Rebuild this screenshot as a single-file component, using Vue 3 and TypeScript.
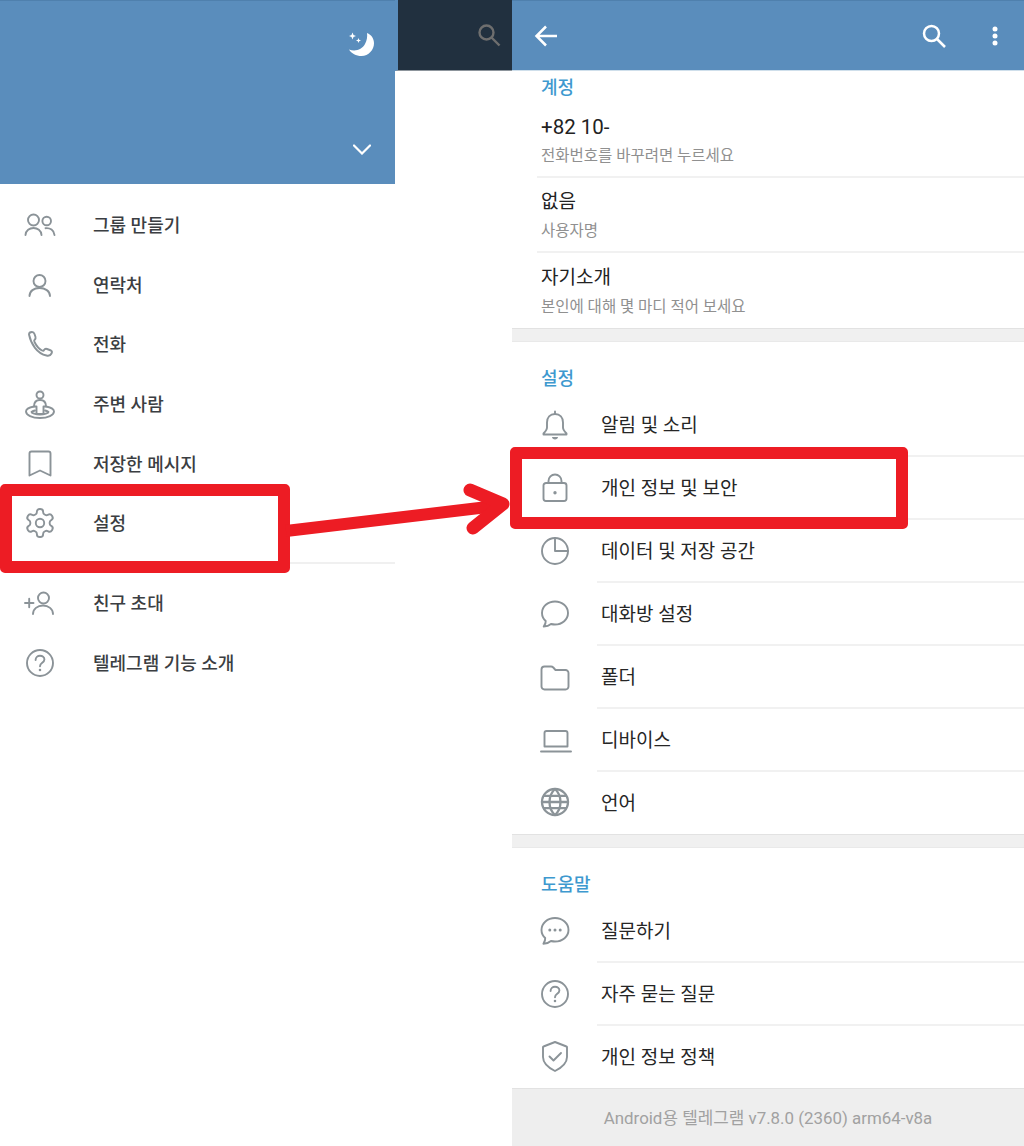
<script setup lang="ts">
type Icon = { view?: string; width?: number; paths: string[]; solid?: string[]; cover?: string[] };

const question: Icon = {
  paths: [
    "M29 16a13 13 0 1 1-26 0 13 13 0 0 1 26 0z",
    "M11.600 13c0-2.600 2-4.200 4.400-4.200s4.400 1.500 4.400 3.800c0 3.200-4.400 3.300-4.400 6.600",
  ],
  solid: ["M14.700 23a1.300 1.300 0 1 0 2.600 0 1.300 1.300 0 0 0-2.600 0z"],
};

const icons: Record<string, Icon> = {
  group: {
    paths: [
      "M15 11a5.500 5.500 0 1 1-11 0 5.500 5.500 0 0 1 11 0z",
      "M27 12a4.300 4.300 0 1 1-8.600 0 4.300 4.300 0 0 1 8.600 0z",
      "M1.500 26c.3-4.500 4-7 8-7s7.700 2.500 8 7",
      "M21.500 19.200c4.500-.6 8.600 2 9 6.800",
    ],
  },
  person: {
    paths: [
      "M21.500 12a6 6 0 1 1-12 0 6 6 0 0 1 12 0z",
      "M5.500 27c0-5 4.500-8 10-8s10.500 3 10.500 8",
    ],
  },
  phone: {
    paths: [
      "M5 6.500C5 5 6.500 4 8 4c1 0 2 .5 2.500 2l1 3c.5 1.500 0 2-1 3-.5.5-.5 1 0 2 2 4 4.500 7 7.500 8.500 1 .5 1.500.5 2-.5.5-.8 1.500-1.500 3-1l4 1.500c1 .5 1 2 .5 3-1 2-3 2.500-5 2C13 25.500 7 16 5 6.500z",
    ],
  },
  nearby: {
    paths: [
      "M10 18.500C5 19.500 2 21 2 23.500 2 27 8 30 16 30s14-3 14-6.500c0-2.500-3-4-8-5",
      "M11 22.500c-2 .5-3.500 1-3.500 1.500 0 1 4 2.500 8.500 2.500s8.500-1.500 8.500-2.500c0-.5-1.500-1-3.500-1.500",
      "M19.500 7a3.500 3.500 0 1 1-7 0 3.500 3.500 0 0 1 7 0z",
    ],
    cover: ["M10 18.500c0-4.500 2.500-6.500 6-6.500s6 2 6 6.500h-2.500V26h-7v-7.500z"],
  },
  bookmark: {
    paths: ["M7.500 3.500h17a2 2 0 0 1 2 2v22l-10.500-5-10.500 5v-22a2 2 0 0 1 2-2z"],
  },
  gear: {
    view: "0.600 0.600 22.800 22.800",
    paths: [
      "M12.220 2h-.44a2 2 0 0 0-2 2v.18a2 2 0 0 1-1 1.730l-.43.25a2 2 0 0 1-2 0l-.15-.08a2 2 0 0 0-2.730.73l-.22.38a2 2 0 0 0 .73 2.730l.15.1a2 2 0 0 1 1 1.720v.51a2 2 0 0 1-1 1.740l-.15.09a2 2 0 0 0-.73 2.730l.22.38a2 2 0 0 0 2.730.73l.15-.08a2 2 0 0 1 2 0l.43.25a2 2 0 0 1 1 1.730V20a2 2 0 0 0 2 2h.44a2 2 0 0 0 2-2v-.18a2 2 0 0 1 1-1.730l.43-.25a2 2 0 0 1 2 0l.15.08a2 2 0 0 0 2.730-.73l.22-.39a2 2 0 0 0-.73-2.730l-.15-.08a2 2 0 0 1-1-1.740v-.5a2 2 0 0 1 1-1.740l.15-.09a2 2 0 0 0 .73-2.730l-.22-.38a2 2 0 0 0-2.730-.73l-.15.08a2 2 0 0 1-2 0l-.43-.25a2 2 0 0 1-1-1.730V4a2 2 0 0 0-2-2z",
      "M15 12a3 3 0 1 1-6 0 3 3 0 0 1 6 0z",
    ],
  },
  invite: {
    paths: [
      "M1 16h8.500M5.200 11.700v8.600",
      "M25 11a5.500 5.500 0 1 1-11 0 5.500 5.500 0 0 1 11 0z",
      "M9 27c0-5 4.500-8.500 10-8.500s10 3.500 10 8.500",
    ],
  },
  question,
  bell: {
    paths: [
      "M16 5c-5 0-8 3.500-8 8.500v5c0 2.500-1.500 4-3.500 6v1h23v-1c-2-2-3.500-3.500-3.500-6v-5C24 8.500 21 5 16 5z",
      "M16 2.500V5",
    ],
    solid: ["M13 28h6c0 1.500-1.400 2.500-3 2.500s-3-1-3-2.500z"],
  },
  lock: {
    paths: [
      "M7 11h18a2.500 2.500 0 0 1 2.500 2.500v13a2.500 2.500 0 0 1-2.500 2.500H7a2.500 2.500 0 0 1-2.500-2.500v-13A2.500 2.500 0 0 1 7 11z",
      "M9.500 11V9a6.500 6.500 0 0 1 13 0v2",
    ],
    solid: ["M14.300 20.800a1.700 1.700 0 1 0 3.400 0 1.700 1.700 0 0 0-3.400 0z"],
  },
  pie: {
    paths: [
      "M29 16a13 13 0 1 1-26 0 13 13 0 0 1 26 0z",
      "M16 3v13h13",
    ],
  },
  chat: {
    paths: [
      "M16 3.500c-7.200 0-13 5-13 11.500 0 3.200 1.400 6 3.700 8 .2 2-.8 4-2 5.500 3-.1 5.500-1 7.300-2.500 1.300.3 2.600.5 4 .5 7.200 0 13-5 13-11.500S23.200 3.500 16 3.500z",
    ],
  },
  folder: {
    paths: [
      "M5.500 5.500h6.500c1 0 1.700.4 2.300 1l2.200 2.500h10a3 3 0 0 1 3 3v13.500a3 3 0 0 1-3 3H5.500a3 3 0 0 1-3-3v-17a3 3 0 0 1 3-3z",
    ],
  },
  laptop: {
    width: 34,
    paths: [
      "M7.500 7h19a2 2 0 0 1 2 2v13.500h-23V9a2 2 0 0 1 2-2z",
      "M2 27.500h30",
    ],
  },
  globe: {
    paths: [
      "M29 16a13 13 0 1 1-26 0 13 13 0 0 1 26 0z",
      "M16 3c-3.600 3.300-5.500 7.800-5.500 13s1.900 9.700 5.500 13c3.600-3.300 5.500-7.800 5.500-13S19.600 6.300 16 3z",
      "M3 16h26M5 9.800h22M5 22.200h22",
    ],
  },
  ask: {
    paths: [
      "M16 3c-7.500 0-13.500 5.300-13.500 12 0 3.200 1.400 6 3.700 8 .2 2-.6 4-1.800 5.800 3-.1 5.800-1.200 7.600-2.800 1.300.3 2.600.5 4 .5 7.500 0 13.500-5 13.500-11.500S23.500 3 16 3z",
    ],
    solid: [
      "M9.300 15a1.500 1.500 0 1 0 3 0 1.500 1.500 0 0 0-3 0zM14.500 15a1.500 1.500 0 1 0 3 0 1.500 1.500 0 0 0-3 0zM19.700 15a1.500 1.500 0 1 0 3 0 1.500 1.500 0 0 0-3 0z",
    ],
  },
  shield: {
    paths: [
      "M16 2l11.500 4.500c.3 0 .5.3.5.6V17c0 6-5 10.500-12 14-7-3.500-12-8-12-14V7.100c0-.3.2-.6.5-.6L16 2z",
      "M10.500 16.500l4 4 7.500-7.500",
    ],
  },
};

const drawerTop = [
  { icon: "group", label: "그룹 만들기" },
  { icon: "person", label: "연락처" },
  { icon: "phone", label: "전화" },
  { icon: "nearby", label: "주변 사람" },
  { icon: "bookmark", label: "저장한 메시지" },
  { icon: "gear", label: "설정" },
];
const drawerBottom = [
  { icon: "invite", label: "친구 초대" },
  { icon: "question", label: "텔레그램 기능 소개" },
];

const account = [
  { value: "+82 10-", hint: "전화번호를 바꾸려면 누르세요", phone: true },
  { value: "없음", hint: "사용자명", phone: false },
  { value: "자기소개", hint: "본인에 대해 몇 마디 적어 보세요", phone: false },
];

const sections = [
  {
    title: "설정",
    rows: [
      { icon: "bell", label: "알림 및 소리" },
      { icon: "lock", label: "개인 정보 및 보안" },
      { icon: "pie", label: "데이터 및 저장 공간" },
      { icon: "chat", label: "대화방 설정" },
      { icon: "folder", label: "폴더" },
      { icon: "laptop", label: "디바이스" },
      { icon: "globe", label: "언어" },
    ],
  },
  {
    title: "도움말",
    rows: [
      { icon: "ask", label: "질문하기" },
      { icon: "question", label: "자주 묻는 질문" },
      { icon: "shield", label: "개인 정보 정책" },
    ],
  },
];

const viewBox = (name: string) => {
  const ic = icons[name];
  return ic.view ?? `0 0 ${ic.width ?? 32} 32`;
};
</script>

<template>
  <div class="page">
    <section class="left">
      <div class="drawer">
        <header class="drawer-head">
          <svg class="moon" width="27" height="27" viewBox="0 0 27 27" fill="#fff">
            <path d="M19 2c4.500 1.700 7 5.700 7 10.300C26 19 20.500 25 13.500 25 8 25 3.500 22.500 1 18.500c6.500 2.500 13 0 16-5.500 2-3.500 2.500-7.500 2-11z" />
            <path d="M4.500 1.500l1 2.500 2.500 1-2.500 1-1 2.500-1-2.500L1 5l2.500-1zM10.500 7l.7 1.800 1.800.7-1.800.7-.7 1.800-.7-1.800L8 9.500l1.800-.7z" />
          </svg>
          <svg class="chevron" width="18" height="11" viewBox="0 0 18 11" fill="none" stroke="#fff" stroke-width="2.200" stroke-linecap="round">
            <path d="M1 1.500l8 8 8-8" />
          </svg>
        </header>
        <ul class="drawer-list">
          <li v-for="item in drawerTop" :key="item.label" class="drawer-row">
            <svg class="icon" width="32" height="32" :viewBox="viewBox(item.icon)" :stroke-width="icons[item.icon].view ? 1.35 : 1.9">
              <path v-for="d in icons[item.icon].paths" :key="d" :d="d" />
              <path v-for="d in icons[item.icon].cover" :key="d" :d="d" class="cover" />
              <path v-for="d in icons[item.icon].solid" :key="d" :d="d" class="solid" />
            </svg>
            <span>{{ item.label }}</span>
          </li>
          <li class="drawer-sep" />
          <li v-for="item in drawerBottom" :key="item.label" class="drawer-row">
            <svg class="icon" width="32" height="32" :viewBox="viewBox(item.icon)" stroke-width="1.900">
              <path v-for="d in icons[item.icon].paths" :key="d" :d="d" />
              <path v-for="d in icons[item.icon].solid" :key="d" :d="d" class="solid" />
            </svg>
            <span>{{ item.label }}</span>
          </li>
        </ul>
      </div>
      <div class="dim-bar">
        <svg width="24" height="24" viewBox="0 0 24 24" fill="none" stroke="#6e6e6e" stroke-width="2.400">
          <circle cx="9.500" cy="9.500" r="7" />
          <path d="M14.500 14.500l8 8" />
        </svg>
      </div>
    </section>

    <section class="right">
      <header class="top-bar">
        <svg width="24" height="24" viewBox="0 0 24 24" fill="none" stroke="#fff" stroke-width="2.500">
          <path d="M23 12H3M12 2.500L2.500 12l9.500 9.500" />
        </svg>
        <span class="spacer" />
        <svg width="24" height="24" viewBox="0 0 24 24" fill="none" stroke="#fff" stroke-width="2.500">
          <circle cx="9.500" cy="9.500" r="7.500" />
          <path d="M15 15l8 8" />
        </svg>
        <svg class="dots" width="8" height="20" viewBox="0 0 8 20" fill="#fff">
          <circle cx="4" cy="3" r="2.500" />
          <circle cx="4" cy="10" r="2.500" />
          <circle cx="4" cy="17" r="2.500" />
        </svg>
      </header>

      <div class="block account">
        <h2 class="block-title first">계정</h2>
        <div v-for="row in account" :key="row.hint" class="account-row">
          <span class="value" :class="{ phone: row.phone }">{{ row.value }}</span>
          <span class="hint">{{ row.hint }}</span>
        </div>
      </div>

      <template v-for="sec in sections" :key="sec.title">
        <div class="band" />
        <div class="block">
          <h2 class="block-title">{{ sec.title }}</h2>
          <div v-for="row in sec.rows" :key="row.label" class="menu-row">
            <svg class="icon" width="32" height="32" :class="{ wide: icons[row.icon].width }" :viewBox="viewBox(row.icon)" :stroke-width="row.icon === 'globe' ? 2.3 : 1.9">
              <path v-for="d in icons[row.icon].paths" :key="d" :d="d" />
              <path v-for="d in icons[row.icon].solid" :key="d" :d="d" class="solid" />
            </svg>
            <span class="menu-label">{{ row.label }}</span>
          </div>
        </div>
      </template>

      <footer class="version">Android용 텔레그램 v7.8.0 (2360) arm64-v8a</footer>
    </section>

    <!-- red annotation drawn over the two screenshots -->
    <div class="mark mark-left" />
    <div class="mark mark-right" />
    <svg class="arrow" width="1024" height="1146" viewBox="0 0 1024 1146" fill="none" stroke="#ed1c24" stroke-width="12">
      <path d="M286 531L496 506" />
      <path d="M470 490L503 504L473 528" stroke-width="13" stroke-linecap="round" stroke-linejoin="round" />
    </svg>
  </div>
</template>

<style scoped>
.page {
  position: relative;
  display: flex;
  width: 1024px;
  height: 1146px;
  overflow: hidden;
  background: #fff;
  font-family: Roboto, "Noto Sans CJK KR", sans-serif;
}
.left {
  display: grid;
  grid-template-columns: 395px 1fr;
  width: 512px;
  align-items: start;
}
.drawer-head {
  display: flex;
  flex-direction: column;
  justify-content: space-between;
  align-items: flex-end;
  height: 184px;
  padding: 30px 20px 29px;
  box-sizing: border-box;
  background: #5a8dbc;
  border-top: 1px solid #4f80ad;
}
.chevron {
  margin-right: 4px;
}
.drawer-list {
  margin: 0;
  padding: 10px 0 0;
  list-style: none;
}
.drawer-row {
  display: flex;
  align-items: center;
  height: 59.7px;
  padding-left: 24px;
  color: #3b3e42;
  font-size: 18px;
  font-weight: 500;
}
.drawer-row .icon {
  margin-top: 2px;
}
.drawer-row span {
  margin-left: 37px;
}
.drawer-sep {
  height: 20px;
  box-sizing: border-box;
  border-top: 10.500px solid #fff;
  border-bottom: 8px solid #fff;
  background: #f0f0f0;
}
.icon {
  flex: none;
  fill: none;
  stroke: #8b9398;
  stroke-linecap: round;
  stroke-linejoin: round;
}
.icon .solid {
  fill: #8b9398;
  stroke: none;
}
.icon .cover {
  fill: #fff;
}
.dim-bar {
  display: flex;
  align-items: center;
  justify-content: flex-end;
  height: 71px;
  padding-right: 11px;
  box-sizing: border-box;
  background: #21303f;
  border-left: 3px solid #5a8dbc;
  border-bottom: 1px solid #8d959c;
}
.right {
  display: flex;
  flex-direction: column;
  width: 512px;
}
.top-bar {
  display: flex;
  align-items: center;
  gap: 24px;
  height: 71px;
  padding: 0 25px 0 22px;
  box-sizing: border-box;
  background: #5a8dbc;
  border-top: 1px solid #4f80ad;
  border-bottom: 1px solid #cfdfeb;
}
.spacer {
  flex: 1;
}
.dots {
  margin-left: 21px;
}
.block-title {
  margin: 0;
  padding: 25px 0 0 29px;
  height: 52px;
  box-sizing: border-box;
  color: #3e99cf;
  font-size: 18px;
  font-weight: 500;
  line-height: 24px;
}
.block-title.first {
  height: 32px;
  padding-top: 5px;
}
.account {
  height: 257px;
}
.account-row {
  display: flex;
  flex-direction: column;
  justify-content: center;
  gap: 5px;
  height: 75px;
  margin-left: 25px;
  padding: 1px 0 0 4px;
  box-sizing: border-box;
  border-bottom: 2px solid #f1f1f1;
}
.account-row:last-child {
  border-bottom: 0;
}
.value {
  color: #222;
  font-size: 19px;
  line-height: 26px;
}
.value.phone {
  font-size: 20.500px;
}
.hint {
  color: #909090;
  font-size: 15.500px;
  line-height: 22px;
}
.band {
  height: 14px;
  box-sizing: border-box;
  background: #f0f0f0;
  border-top: 1px solid #e2e2e2;
  border-bottom: 1px solid #e9e9e9;
}
.menu-row {
  display: flex;
  align-items: center;
  height: 63px;
  padding-left: 27px;
}
.menu-row:last-child {
  height: 62px;
}
.menu-row .icon {
  margin-top: -2px;
}
.menu-row .icon.wide {
  width: 34px;
  margin-right: -2px;
}
.menu-label {
  display: flex;
  flex: 1;
  align-items: center;
  align-self: stretch;
  margin-left: 26px;
  padding: 0 0 2px 4px;
  color: #262626;
  font-size: 19px;
  box-sizing: border-box;
  border-bottom: 2px solid #f1f1f1;
}
.menu-row:last-child .menu-label {
  padding-bottom: 4px;
  border-bottom: 0;
}
.version {
  display: flex;
  flex: 1;
  align-items: center;
  justify-content: center;
  padding-bottom: 2px;
  background: #eeeeee;
  border-top: 1px solid #e2e2e2;
  color: #a1a1a1;
  font-size: 16.900px;
}
.mark {
  position: absolute;
  box-sizing: border-box;
  border: 12px solid #ed1c24;
  border-radius: 5px;
}
.mark-left {
  left: 0;
  top: 484px;
  width: 290px;
  height: 89px;
}
.mark-right {
  left: 510px;
  top: 447px;
  width: 398px;
  height: 82px;
}
.arrow {
  position: absolute;
  left: 0;
  top: 0;
  pointer-events: none;
}
</style>
